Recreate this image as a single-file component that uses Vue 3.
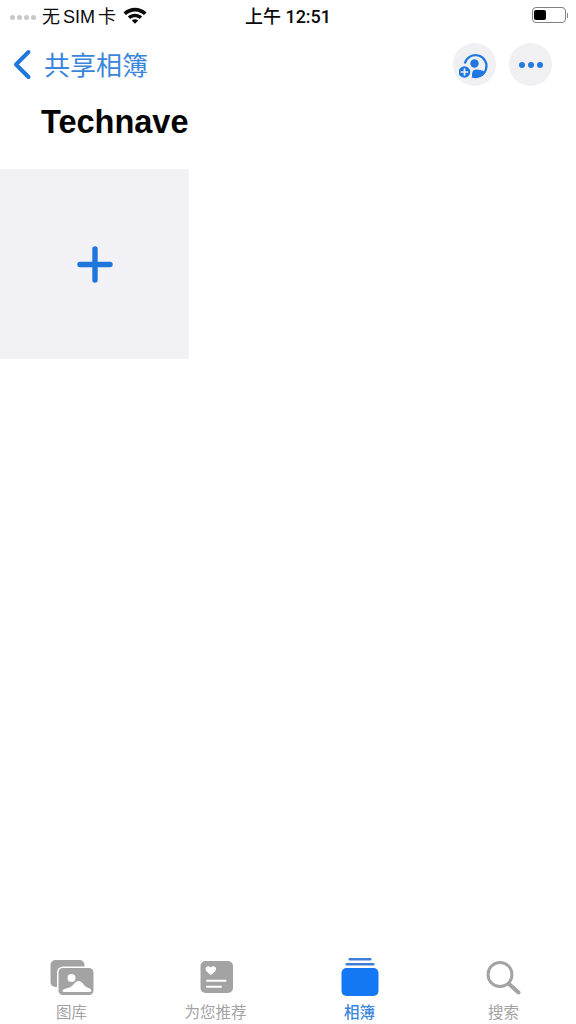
<script setup>
</script>

<template>
  <div class="page">
    <header class="status">
      <div class="status-left">
        <div class="signal"><i></i><i></i><i></i><i></i></div>
        <span class="carrier">无 SIM 卡</span>
        <svg class="wifi" width="24" height="17" viewBox="0 0 24 17">
          <path d="M.5 5.500C7-.7 17-.7 23.500 5.500L21 8C15.700 3.200 8.300 3.200 3 8Z" fill="#0a0a0a"/>
          <path d="M4.800 9.500c4.100-3.600 10.300-3.600 14.400 0l-2.500 2.500c-2.700-2.300-6.700-2.300-9.400 0Z" fill="#0a0a0a"/>
          <path d="M8.800 13.400c1.900-1.400 4.500-1.400 6.400 0L12 16.800Z" fill="#0a0a0a"/>
        </svg>
      </div>
      <span class="time">上午 12:51</span>
      <div class="battery-wrap">
        <div class="battery"><div class="charge"></div></div>
        <div class="nub"></div>
      </div>
    </header>

    <nav class="nav">
      <div class="back">
        <svg width="20" height="31" viewBox="0 0 20 31">
          <path d="M16.500 3 4 15.500 16.500 28" fill="none" stroke="#2277dd" stroke-width="4" stroke-linecap="round" stroke-linejoin="round"/>
        </svg>
        <span>共享相簿</span>
      </div>
      <div class="actions">
        <div class="round">
          <svg width="32" height="32" viewBox="0 0 32 32">
            <path d="M5.800 14.500A11 11 0 1 1 13 27.500" fill="none" stroke="#1f78e0" stroke-width="2.200"/>
            <circle cx="15.500" cy="14.500" r="4.200" fill="#1f78e0"/>
            <path d="M13 27.500c0-4 .5-7 4-7 4 0 7 .8 9 3a11 11 0 0 1-9 4.500c-1.500 0-3-.2-4-.5Z" fill="#1f78e0"/>
            <circle cx="5.500" cy="23" r="7.300" fill="#f0f0f3"/>
            <circle cx="5.500" cy="23" r="5.800" fill="#1f78e0"/>
            <path d="M2.500 23h6M5.500 20v6" stroke="#f0f0f3" stroke-width="1.700" stroke-linecap="round"/>
          </svg>
        </div>
        <div class="round dots"><i></i><i></i><i></i></div>
      </div>
    </nav>

    <h1 class="title">Technave</h1>

    <div class="tile">
      <svg width="36" height="37" viewBox="0 0 36 37">
        <path d="M18 3v31M3 18.500h30" stroke="#1e75dc" stroke-width="5.400" stroke-linecap="round"/>
      </svg>
    </div>

    <footer class="tabs">
      <div class="tab">
        <svg width="46" height="38" viewBox="0 0 46 38">
          <g transform="translate(1.500 2)">
            <rect width="34" height="27" rx="5" fill="#a3a3a3"/>
            <rect x="6.500" y="6.500" width="38" height="30" rx="6" fill="#fff"/>
            <rect x="8" y="8" width="35" height="27" rx="4.500" fill="#a3a3a3"/>
            <circle cx="21" cy="18" r="4" fill="#fff"/>
            <path d="M13.500 32c-2 0-2-1.800-.5-2.500 2.500-1.200 4.500-1.300 7-2.500 3-1.400 4.500-6 8-6 4 0 5 4.500 8 6 1.800 1 3.500 1.300 4.500 2.500.8 1 .3 2.500-1.500 2.500Z" fill="#fff"/>
          </g>
        </svg>
        <span>图库</span>
      </div>
      <div class="tab">
        <svg width="46" height="38" viewBox="0 0 46 38">
          <g transform="translate(7.500 3)">
            <rect width="32.500" height="32" rx="5" fill="#a3a3a3"/>
            <path d="M10.300 14C7.800 12 5 10.300 5 8c0-3.300 4-3.700 5.300-1.300C11.600 4.300 15.600 4.700 15.600 8c0 2.300-2.800 4-5.300 6Z" fill="#fff"/>
            <path d="M6.500 19.700H25M6.500 25.700h14" stroke="#fff" stroke-width="2" stroke-linecap="round"/>
          </g>
        </svg>
        <span>为您推荐</span>
      </div>
      <div class="tab active">
        <svg width="46" height="38" viewBox="0 0 46 38">
          <rect x="11.500" y="0" width="23" height="2.500" rx="1.250" fill="#3f7fd4"/>
          <rect x="8.500" y="5" width="29" height="2.500" rx="1.250" fill="#3f7fd4"/>
          <rect x="4.500" y="10" width="37" height="28" rx="5" fill="#1478f5"/>
        </svg>
        <span>相簿</span>
      </div>
      <div class="tab">
        <svg width="46" height="38" viewBox="0 0 46 38">
          <circle cx="19" cy="16.500" r="12" fill="none" stroke="#a3a3a3" stroke-width="3"/>
          <path d="M28 26 37.500 34.500" stroke="#a3a3a3" stroke-width="4" stroke-linecap="round"/>
        </svg>
        <span>搜索</span>
      </div>
    </footer>
  </div>
</template>

<style>
html, body { margin: 0; background: #fff; }
</style>

<style scoped>
.page {
  width: 576px;
  height: 1024px;
  display: flex;
  flex-direction: column;
  background: #fff;
  overflow: hidden;
  font-family: "Liberation Sans", "Noto Sans CJK SC", sans-serif;
}
.status {
  height: 30px;
  display: grid;
  grid-template-columns: 1fr auto 1fr;
  align-items: center;
  color: #0a0a0a;
  font-size: 18px;
}
.status-left { display: flex; align-items: center; padding-left: 10px; }
.signal { display: flex; gap: 2px; margin-right: 6px; margin-top: 5px; }
.signal i { width: 5px; height: 5px; border-radius: 50%; background: #c8c8c8; }
.carrier { word-spacing: -2px; white-space: nowrap; }
.wifi { margin-left: 7px; }
.time { white-space: nowrap; font-family: Roboto, "Noto Sans CJK SC", sans-serif; font-weight: 500; }
.battery-wrap { display: flex; align-items: center; justify-content: flex-end; padding-right: 8px; }
.battery {
  box-sizing: border-box;
  width: 34px;
  height: 16px;
  padding: 2px 2px 2px 1px;
  border: 1px solid #808080;
  border-radius: 4px;
  display: flex;
}
.charge { width: 12px; background: #000; border-radius: 2px; }
.nub { width: 1.500px; height: 5px; background: #888; margin-left: 1px; }
.nav {
  height: 43px;
  margin-top: 13px;
  padding: 0 24px 0 14px;
  display: flex;
  justify-content: space-between;
  align-items: center;
}
.back { display: flex; align-items: center; gap: 12px; color: #3a86dc; font-size: 26px; }
.back svg { margin-left: -2px; }
.back span { padding-bottom: 2px; }
.actions { display: flex; gap: 13px; }
.round {
  width: 43px;
  height: 43px;
  border-radius: 50%;
  background: #f0f0f3;
  display: flex;
  align-items: center;
  justify-content: center;
}
.dots { gap: 3px; }
.dots i { width: 6px; height: 6px; border-radius: 50%; background: #2379dd; }
.title {
  margin: 16px 0 0 41px;
  font-size: 32.500px;
  line-height: 40px;
  font-weight: 700;
  color: #050505;
}
.tile {
  width: 189px;
  height: 190px;
  margin-top: 27px;
  background: #f1f1f6;
  display: flex;
  align-items: center;
  justify-content: center;
}
.tabs {
  margin-top: auto;
  height: 66px;
  margin-left: -0.5px;
  margin-bottom: 2px;
  display: grid;
  grid-template-columns: repeat(4, 144px);
}
.tab {
  display: flex;
  flex-direction: column;
  align-items: center;
  justify-content: flex-end;
  gap: 8px;
  color: #a3a3a3;
  font-size: 15.500px;
  line-height: 18px;
}
.tab svg { margin-bottom: 0; }
.tab.active { color: #3a86dc; font-weight: 500; }
</style>
